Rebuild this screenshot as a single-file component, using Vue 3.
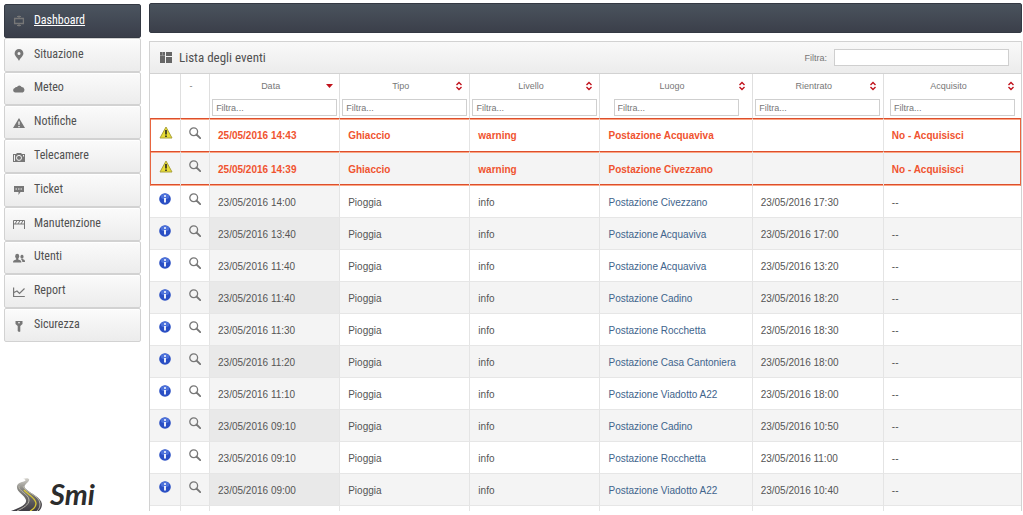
<script setup>
import { ref } from 'vue'

const menu = [
  { label: 'Dashboard', icon: 'board' },
  { label: 'Situazione', icon: 'pin' },
  { label: 'Meteo', icon: 'cloud' },
  { label: 'Notifiche', icon: 'alert' },
  { label: 'Telecamere', icon: 'camera' },
  { label: 'Ticket', icon: 'ticket' },
  { label: 'Manutenzione', icon: 'barrier' },
  { label: 'Utenti', icon: 'users' },
  { label: 'Report', icon: 'chart' },
  { label: 'Sicurezza', icon: 'key' },
]
const columns = ['Data', 'Tipo', 'Livello', 'Luogo', 'Rientrato', 'Acquisito']
const filters = ref(columns.map(() => ''))
const search = ref('')

const rain = (date, place, end) => ({
  date: '23/05/2016 ' + date, type: 'Pioggia', level: 'info',
  place: 'Postazione ' + place, end: '23/05/2016 ' + end, ack: '--',
})
const ice = (date, place) => ({
  date: '25/05/2016 ' + date, type: 'Ghiaccio', level: 'warning',
  place: 'Postazione ' + place, end: '', ack: 'No - Acquisisci',
})
const events = [
  ice('14:43', 'Acquaviva'),
  ice('14:39', 'Civezzano'),
  rain('14:00', 'Civezzano', '17:30'),
  rain('13:40', 'Acquaviva', '17:00'),
  rain('11:40', 'Acquaviva', '13:20'),
  rain('11:40', 'Cadino', '18:20'),
  rain('11:30', 'Rocchetta', '18:30'),
  rain('11:20', 'Casa Cantoniera', '18:00'),
  rain('11:10', 'Viadotto A22', '18:00'),
  rain('09:10', 'Cadino', '10:50'),
  rain('09:10', 'Rocchetta', '11:00'),
  rain('09:00', 'Viadotto A22', '10:40'),
]
</script>

<template>
  <div class="page">
    <aside class="side">
      <nav class="menu">
        <a v-for="(m, i) in menu" :key="m.label" href="#" class="item" :class="{ active: i === 0 }">
          <svg class="glyph" viewBox="0 0 12 12" aria-hidden="true">
            <g v-if="m.icon === 'board'" fill="none" stroke="currentColor"><path stroke-width="1.300" d="M1.600 3.500h8.800v5H1.600z" /><path d="M6 .5v3M6 8.500v3M4 1.500h4M4 10.500h4" /></g>
            <path v-else-if="m.icon === 'pin'" fill="currentColor" fill-rule="evenodd" d="M6 0a4.400 4.400 0 0 1 4.400 4.400C10.400 7 7 9 6 12 5 9 1.600 7 1.600 4.400A4.400 4.400 0 0 1 6 0zM6 3a1.500 1.500 0 1 0 0 3 1.500 1.500 0 0 0 0-3z" />
            <path v-else-if="m.icon === 'cloud'" fill="currentColor" d="M2.300 9.500A2.300 2.300 0 0 1 1.800 5 2 2 0 0 1 4 4a2.500 2.500 0 0 1 4.600 0 2.900 2.900 0 0 1 1.200 5.500z" />
            <path v-else-if="m.icon === 'alert'" fill="currentColor" fill-rule="evenodd" d="M6 1l6 10H0zM5.200 4.500l.3 3.500h1l.3-3.500zM5.300 9v1.300h1.400V9z" />
            <g v-else-if="m.icon === 'camera'"><path fill="currentColor" d="M0 3h3l1-1h4l1 1h3v8H0z" /><circle cx="6" cy="6.900" r="2.500" fill="none" stroke="#f4f4f4" /><path stroke="#f4f4f4" d="M1.500 4v6M10.500 4v1.500" /></g>
            <g v-else-if="m.icon === 'ticket'"><path fill="currentColor" d="M1 2h10v6H7.500L5.500 11V8H1z" /><path d="M2.500 5h7" stroke="#eee" stroke-dasharray="1.500 1" /></g>
            <g v-else-if="m.icon === 'barrier'" fill="none" stroke="currentColor"><path d="M.5 11V2.500h11V11M.5 6h11M2 6l2-3.500M5 6l2-3.500M8 6l2-3.500" /></g>
            <g v-else-if="m.icon === 'users'" fill="currentColor"><ellipse cx="4.200" cy="4.300" rx="2" ry="2.500" /><path d="M0 10.500c0-2 1-2.500 3.200-3V6h2v1.500c2.200.5 3.200 1 3.200 3z" /><ellipse cx="9" cy="4.800" rx="1.600" ry="2" /><path d="M8.500 7h1c2 .7 2.500 1.200 2.500 3H9.300c0-1.500-.3-2-1.300-2.500z" /></g>
            <g v-else-if="m.icon === 'chart'" fill="none" stroke="currentColor" stroke-width="1.200"><path d="M.6 1.500v9h11.200M1 6.500l3-1.500 2.500 2.500 5-5" /></g>
            <path v-else fill="currentColor" fill-rule="evenodd" d="M2.500 1h7v3L7.300 6v5.500L6 12l-1.300-1V6L2.500 4zM5 2.200v1h2v-1z" />
          </svg>
          <span>{{ m.label }}</span>
        </a>
      </nav>
      <div class="logo">
        <svg class="road" viewBox="0 0 34 34" aria-hidden="true">
          <defs>
            <linearGradient id="tar" x1="0" y1="0" x2="0" y2="1">
              <stop offset="0" stop-color="#d4d2cc" /><stop offset=".35" stop-color="#85847f" /><stop offset="1" stop-color="#3d3b43" />
            </linearGradient>
          </defs>
          <path fill="url(#tar)" d="M13 2c5-2 8 0 5 3-3 3-5 4-2 7 5 5 15 8 16 15 0 3-1 5-3 7H1c8-3 16-6 15-11C15 18 6 15 7 9c1-4 6-4 8-5 1-1 0-2-2-2z" />
          <path fill="none" stroke="#b9b6ab" stroke-width="1" d="M9 9c-1 5 10 8 10 14 0 5-6 8-12 11M13 9c1 6 17 9 17 18 0 3-1 5-3 7" />
          <path fill="none" stroke="#d8c634" stroke-width="1.300" d="M14 13c3 4 11 7 12 13 0 3-2 6-6 8" />
        </svg>
        <span class="brand">Smi</span>
      </div>
    </aside>

    <main class="content">
      <div class="topbar"></div>
      <section class="panel">
        <header class="head">
          <svg class="tiles" viewBox="0 0 12 11" aria-hidden="true"><path fill="#666" d="M0 0h5v3H0zM0 3h5v8H0zM6 0h6v4H6zM6 5h6v6H6z" /><path stroke="#aaa" stroke-width=".6" d="M0 3.500h5M2.500 0v3.500" /></svg>
          <h1>Lista degli eventi</h1>
          <label for="search">Filtra:</label>
          <input id="search" v-model="search" type="text" class="search" />
        </header>
        <table>
          <colgroup>
            <col class="c-icon" /><col class="c-view" /><col class="c-std" /><col class="c-std" /><col class="c-std" /><col class="c-place" /><col class="c-end" /><col class="c-ack" />
          </colgroup>
          <thead>
            <tr>
              <th></th>
              <th><div class="label dash">-</div></th>
              <th v-for="(c, i) in columns" :key="c">
                <div class="label">
                  <span>{{ c }}</span>
                  <svg class="sort" viewBox="0 0 8 10" aria-hidden="true">
                    <path v-if="i === 0" fill="#c1121c" d="M1 3h7L4.500 7z" />
                    <path v-else fill="none" stroke="#c1121c" stroke-width="1.400" d="M1.500 4L4 1.500 6.500 4M1.500 6L4 8.500 6.500 6" />
                  </svg>
                </div>
                <input v-model="filters[i]" type="text" class="filter" placeholder="Filtra..." :aria-label="'Filtra ' + c" />
              </th>
            </tr>
          </thead>
          <tbody>
            <tr v-for="(e, i) in events" :key="i" :class="e.level">
              <td class="pic">
                <svg v-if="e.level === 'warning'" class="state tri" viewBox="0 0 14 13" aria-hidden="true">
                  <path d="M7 1l6 11H1z" fill="#e8dc35" stroke="#aaa23c" stroke-linejoin="round" /><path d="M7 4v4.500M7 9.500v1.500" stroke="#222" stroke-width="1.600" />
                </svg>
                <svg v-else class="state" viewBox="0 0 12 12" aria-hidden="true">
                  <circle cx="6" cy="6" r="5.800" fill="#2a4fc4" /><ellipse cx="6" cy="3.500" rx="4.200" ry="2.700" fill="#4d72da" /><path d="M6 5v4.500" fill="none" stroke="#fff" stroke-width="1.800" /><circle cx="6" cy="2.900" r="1" fill="#fff" />
                </svg>
              </td>
              <td class="pic">
                <button type="button" aria-label="Dettagli">
                  <svg viewBox="0 0 12 12" aria-hidden="true"><circle cx="4.700" cy="4.700" r="3.900" fill="none" stroke="#777" stroke-width="1.300" /><path d="M7.500 7.500L11.200 11.200" stroke="#777" stroke-width="1.800" stroke-linecap="round" /></svg>
                </button>
              </td>
              <td class="date">{{ e.date }}</td>
              <td>{{ e.type }}</td>
              <td>{{ e.level }}</td>
              <td><a href="#">{{ e.place }}</a></td>
              <td>{{ e.end }}</td>
              <td><a v-if="e.level === 'warning'" href="#">{{ e.ack }}</a><template v-else>{{ e.ack }}</template></td>
            </tr>
          </tbody>
          <tfoot>
            <tr><td v-for="n in 8" :key="n"></td></tr>
          </tfoot>
        </table>
      </section>
    </main>
  </div>
</template>

<style>
body { background: #fff; }
</style>

<style scoped>
* { box-sizing: border-box; }
.page {
  display: flex;
  gap: 8px;
  height: 100vh;
  padding: 3px 1px 4px 4px;
  overflow: hidden;
  font: 10px/14px "Liberation Sans", Arial, sans-serif;
  color: #555;
}
.side { flex: 0 0 137px; display: flex; flex-direction: column; }
.menu { display: grid; grid-auto-rows: 1fr; height: 339px; padding-top: 1px; }
.item {
  display: flex;
  align-items: center;
  gap: 9px;
  padding: 0 9px 2px 8px;
  border: 1px solid #d2d2d2;
  border-radius: 2px;
  background: linear-gradient(#fbfbfb, #ececec);
  box-shadow: inset 0 1px #fff;
  color: #505050;
  font: 12px/16px "Roboto Condensed", Lato, sans-serif;
  text-decoration: none;
}
.item.active {
  border-color: #343943;
  background: linear-gradient(#4b545f, #3a3e4a);
  box-shadow: none;
  color: #fff;
  text-decoration: underline;
}
.glyph { width: 12px; height: 12px; margin-top: 3px; color: #777; }
.logo { display: flex; align-items: center; gap: 6px; margin-top: auto; padding-left: 6px; }
.road { width: 34px; height: 34px; }
.brand { color: #2c2c2c; font: italic bold 29px/34px Lato, cursive; }

.content { flex: 1; min-width: 0; display: flex; flex-direction: column; gap: 8px; }
.topbar {
  flex: 0 0 30px;
  border: 1px solid #343943;
  border-radius: 2px;
  background: linear-gradient(#4a535d, #3b3f4a);
}
.panel { flex: 1; min-height: 0; overflow: hidden; border: 1px solid #d2d2d2; border-bottom: 0; }
.head {
  display: flex;
  align-items: center;
  height: 32px;
  padding: 0 12px 0 10px;
  border-bottom: 1px solid #d2d2d2;
  background: linear-gradient(#f9f9f9, #ececec);
  color: #777;
  font-size: 9px;
}
.tiles { width: 12px; height: 11px; margin-right: 7px; }
h1 { margin: 0 auto 0 0; color: #505050; font: 13px/16px "Roboto Condensed", Lato, sans-serif; }
.search { width: 175px; height: 17px; margin-left: 7px; }
input {
  border: 1px solid #cfcfcf;
  padding: 0 3px;
  background: #fff;
  color: #555;
  font: 9px/12px "Liberation Sans", Arial, sans-serif;
}
input::placeholder { color: #777; opacity: 1; }

table { width: 100%; table-layout: fixed; border-collapse: separate; border-spacing: 0; }
.c-icon { width: 31px; }
.c-view { width: 29px; }
.c-std { width: 130px; }
.c-place { width: 152px; }
.c-end { width: 131px; }
.c-ack { width: 137px; }
th { height: 44px; padding: 5px 0 0; border-right: 1px solid #dfdfdf; vertical-align: top; font-weight: normal; color: #777; font-size: 9px; }
th:last-child, td:last-child { border-right: 0; }
.label { position: relative; height: 14px; margin-bottom: 6px; padding-right: 8px; }
.sort { position: absolute; right: 6px; top: 2px; width: 8px; height: 10px; }
.filter { display: block; width: calc(100% - 4px); max-width: 125px; height: 17px; margin: 0 auto; }

td { height: 32px; padding: 2px 8px 0; border-right: 1px solid #e4e4e4; border-bottom: 1px solid #e6e6e6; white-space: nowrap; }
tbody tr:nth-child(even) td { background: #f4f4f4; }
tbody tr.info:nth-child(odd) .date { background: #f4f4f4; }
tbody tr.info:nth-child(even) .date { background: #e9e9e9; }
td.pic { padding: 0 0 5px; text-align: center; }
.state { display: block; width: 12px; height: 12px; margin: 0 auto; }
.state.tri { width: 14px; height: 13px; }
button { display: block; width: 12px; height: 12px; margin: 0 auto; padding: 0; border: 0; background: none; }
button svg { display: block; width: 12px; height: 12px; }
a { color: #41648c; text-decoration: none; }

.warning td { height: 33px; border-top: 1px solid #dc4f2c; border-bottom: 0; box-shadow: inset 0 1px #fba584; color: #f0532f; font-weight: bold; }
.warning + .warning td { height: 35px; border-bottom: 1px solid #fba584; box-shadow: inset 0 1px #fba584, inset 0 -1px #dc4f2c; }
.warning td:first-child { border-left: 1px solid #e8653f; }
.warning td:last-child { border-right: 1px solid #e8653f; }
.warning a { color: inherit; }
tfoot td { height: 5px; padding: 0; border-bottom: 0; }
</style>
